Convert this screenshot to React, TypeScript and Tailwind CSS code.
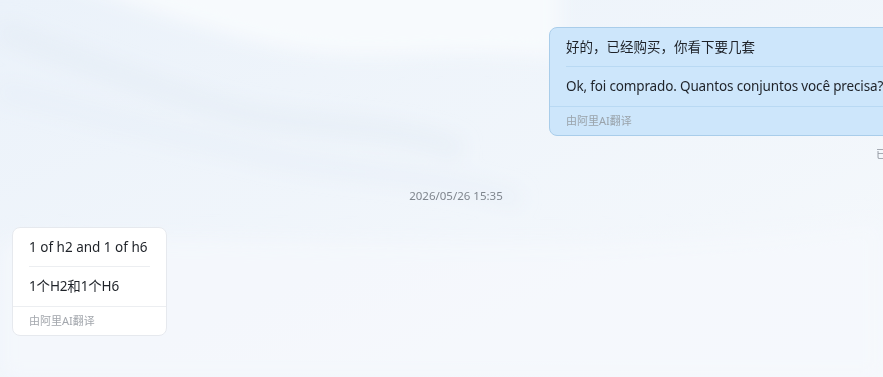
import React from "react";

const font = { fontFamily: '"Segoe UI", "Noto Sans", "Noto Sans CJK SC", sans-serif' };

function Bubble({
  primary,
  secondary,
  mine,
}: {
  primary: string;
  secondary: string;
  mine?: boolean;
}) {
  return (
    <div
      className={
        mine
          ? "rounded-[8px] border border-[#a9cdea] bg-[#cde6fb] text-[#1f2329]"
          : "rounded-[8px] border border-[#e6e9ee] bg-white text-[#1f2329]"
      }
    >
      <div className="px-[16px] pt-[9px]">
        <div className="text-[13.5px] leading-[21px]">{primary}</div>
        <div className={mine ? "mt-[8px] h-px bg-[#b9d9f3]" : "mt-[8px] h-px bg-[#eceef1]"} />
        <div className="mt-[9px] pb-[9px] text-[13.5px] leading-[21px] whitespace-nowrap tracking-[-0.15px]">{secondary}</div>
      </div>
      <div
        className={
          mine
            ? "border-t border-[#b9d9f3] px-[16px] pb-[5px] pt-[5px] text-[11px] leading-[18px] text-[#9aa3ab]"
            : "border-t border-[#eceef1] px-[16px] pb-[5px] pt-[5px] text-[11px] leading-[18px] text-[#a3a7ad]"
        }
      >
        由阿里AI翻译
      </div>
    </div>
  );
}

export default function App() {
  return (
    <div className="relative h-[377px] w-[883px] overflow-hidden bg-[#f1f6fb]" style={font}>
      <svg className="absolute left-0 top-0" width="883" height="377" viewBox="0 0 883 377">
        <defs>
          <linearGradient id="g1" x1="0" y1="0" x2="1" y2="1">
            <stop offset="0" stopColor="#ebf2fa" />
            <stop offset="1" stopColor="#f6f9fc" />
          </linearGradient>
          <filter id="blur" x="-20%" y="-20%" width="140%" height="140%">
            <feGaussianBlur stdDeviation="10" />
          </filter>
        </defs>
        <rect width="883" height="377" fill="url(#g1)" />
        <g filter="url(#blur)">
          <path d="M60 -20 C160 15 220 35 290 50 C380 65 450 45 560 60 L560 -30 Z" fill="#f7fafd" />
          <path d="M0 30 C80 60 160 90 230 110 C300 130 380 120 460 150" stroke="#e2ebf5" strokeWidth="16" fill="none" opacity="0.7" />
          <path d="M0 90 C90 115 170 135 240 150 C330 175 420 170 520 200" stroke="#e5edf6" strokeWidth="12" fill="none" opacity="0.6" />
          <path d="M0 380 L0 240 C250 230 600 260 883 220 L883 380 Z" fill="#f5f8fc" opacity="0.8" />
        </g>
      </svg>

      <div className="relative w-[912px] px-[12px] pt-[27px]">
        <div className="flex flex-col items-end">
          <div className="w-[351px]">
            <Bubble mine primary="好的，已经购买，你看下要几套" secondary="Ok, foi comprado. Quantos conjuntos você precisa?" />
          </div>
          <div className="mt-[10px] mr-[2px] text-[11px] leading-[16px] text-[#8f959e]">已读</div>
        </div>

        <div className="mt-[26px] text-center text-[11.5px] leading-[16px] text-[#7f858d]">2026/05/26 15:35</div>

        <div className="mt-[23px] flex">
          <div className="w-[155px]">
            <Bubble primary="1 of h2 and 1 of h6" secondary="1个H2和1个H6" />
          </div>
        </div>
      </div>
    </div>
  );
}
